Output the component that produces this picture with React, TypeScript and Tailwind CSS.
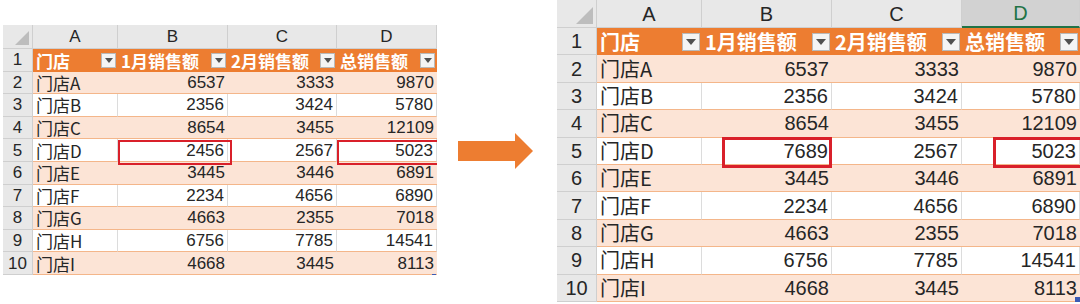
import React from "react";

type Cfg = {
  outer: string;
  rn: string;
  cols: string[];
  headH: string;
  rowH: string;
  text: string;
  label: string;
  btn: string;
  tri: string;
  corner: string;
  selectD: boolean;
  boxes: string[];
  handle: string;
};

const base: [string, number, number, number][] = [
  ["门店A", 6537, 3333, 9870],
  ["门店B", 2356, 3424, 5780],
  ["门店C", 8654, 3455, 12109],
  ["门店D", 2456, 2567, 5023],
  ["门店E", 3445, 3446, 6891],
  ["门店F", 2234, 4656, 6890],
  ["门店G", 4663, 2355, 7018],
  ["门店H", 6756, 7785, 14541],
  ["门店I", 4668, 3445, 8113],
];

const FONT = "font-['Liberation_Sans','Noto_Sans_CJK_SC',sans-serif]";
const CJK = "font-['Noto_Sans_CJK_SC',sans-serif]";

function FilterBtn({ cfg }: { cfg: Cfg }) {
  return (
    <div
      className={`${cfg.btn} shrink-0 bg-[#f4f4f4] border border-[#b9b9b9] flex items-center justify-center`}
    >
      <div className={`${cfg.tri} border-t-[#505050] border-x-transparent`} />
    </div>
  );
}

function Table({ cfg, rows }: { cfg: Cfg; rows: [string, number, number, number][] }) {
  const letters = ["A", "B", "C", "D"];
  const heads = ["门店", "1月销售额", "2月销售额", "总销售额"];
  return (
    <div className={`${cfg.outer} relative overflow-hidden shrink-0 ${FONT} text-[#262626] leading-none`}>
      {/* column letters */}
      <div className={`flex ${cfg.headH}`}>
        <div
          className={`${cfg.rn} shrink-0 bg-[#e8e8e8] border-r border-b border-[#cfcfcf] relative`}
        >
          <div className={`absolute right-[3px] bottom-[3px] ${cfg.corner} bg-[#bdbdbd] [clip-path:polygon(100%_0,100%_100%,0_100%)]`} />
        </div>
        {letters.map((l, i) => {
          const sel = cfg.selectD && i === 3;
          return (
            <div
              key={l}
              className={`${cfg.cols[i]} shrink-0 flex items-center justify-center ${cfg.label} border-r border-[#cfcfcf] ${
                sel
                  ? "bg-[#d2d2d2] border-b-2 border-b-[#217346] text-[#217346]"
                  : "bg-[#e8e8e8] border-b border-b-[#cfcfcf]"
              }`}
            >
              {l}
            </div>
          );
        })}
      </div>
      {/* header row 1 */}
      <div className={`flex ${cfg.rowH}`}>
        <div
          className={`${cfg.rn} shrink-0 bg-[#e8e8e8] border-r border-b border-[#cfcfcf] flex items-center justify-center ${cfg.label}`}
        >
          1
        </div>
        {heads.map((h, i) => (
          <div
            key={h}
            className={`${cfg.cols[i]} shrink-0 bg-[#ed7d31] flex items-center justify-between pl-[3px] pr-[2px] ${CJK} font-bold text-white ${cfg.text}`}
          >
            <span className="leading-none whitespace-nowrap">{h}</span>
            <FilterBtn cfg={cfg} />
          </div>
        ))}
      </div>
      {rows.map((r, idx) => {
        const shaded = idx % 2 === 0;
        return (
          <div key={idx} className={`flex ${cfg.rowH}`}>
            <div
              className={`${cfg.rn} shrink-0 bg-[#e8e8e8] border-r border-b border-[#cfcfcf] flex items-center justify-center ${cfg.label}`}
            >
              {idx + 2}
            </div>
            {[r[0], r[1], r[2], r[3]].map((v, i) => (
              <div
                key={i}
                className={`${cfg.cols[i]} shrink-0 flex items-center whitespace-nowrap ${cfg.text} border-b border-b-[#f4b68a] ${
                  shaded ? "bg-[#fce4d6]" : "bg-white border-r border-r-[#dcdcdc]"
                } ${i === 0 ? `justify-start pl-[3px] ${CJK}` : "justify-end pr-[3px]"}`}
              >
                {v}
              </div>
            ))}
          </div>
        );
      })}
      {cfg.boxes.map((b, i) => (
        <div key={i} className={`absolute ${b} border-[#d9202a]`} />
      ))}
      <div className={`absolute ${cfg.handle} bg-[#3b5bb5]`} />
    </div>
  );
}

const left: Cfg = {
  outer: "w-[434px] mt-[25px] ml-[3px]",
  rn: "w-[30px]",
  cols: ["w-[85px]", "w-[110px]", "w-[109px]", "w-[100px]"],
  headH: "h-[24px]",
  rowH: "h-[22.6px]",
  text: "text-[17px]",
  label: "text-[17px]",
  btn: "w-[15px] h-[15px]",
  tri: "w-0 h-0 border-t-[5px] border-x-[4px]",
  corner: "w-[14px] h-[14px]",
  selectD: false,
  boxes: [
    "left-[115px] top-[115px] w-[114px] h-[25px] border-2",
    "left-[334px] top-[115px] w-[120px] h-[25px] border-2",
  ],
  handle: "left-[429px] top-[249px] w-[4px] h-[4px]",
};

const right: Cfg = {
  outer: "w-[523px] ml-[24px]",
  rn: "w-[40px]",
  cols: ["w-[105px]", "w-[130px]", "w-[130px]", "w-[118px]"],
  headH: "h-[28px]",
  rowH: "h-[27.4px]",
  text: "text-[20px]",
  label: "text-[20px]",
  btn: "w-[18px] h-[18px]",
  tri: "w-0 h-0 border-t-[6px] border-x-[5px]",
  corner: "w-[17px] h-[17px]",
  selectD: true,
  boxes: [
    "left-[165px] top-[137px] w-[110px] h-[31px] border-[3px]",
    "left-[436px] top-[137px] w-[110px] h-[31px] border-[3px]",
  ],
  handle: "left-[518px] top-[297px] w-[5px] h-[5px]",
};

export default function App() {
  const rightRows = base.map((r) =>
    r[0] === "门店D" ? ([r[0], 7689, r[2], r[3]] as [string, number, number, number]) : r
  );
  return (
    <div className="w-[1080px] h-[304px] bg-white flex items-start overflow-hidden">
      <Table cfg={left} rows={base} />
      <div className="ml-[21px] mt-[133px] flex items-center shrink-0">
        <div className="w-[57px] h-[20px] bg-[#ed7d31]" />
        <div className="w-0 h-0 border-l-[18px] border-l-[#ed7d31] border-y-[18.5px] border-y-transparent" />
      </div>
      <Table cfg={right} rows={rightRows} />
    </div>
  );
}
